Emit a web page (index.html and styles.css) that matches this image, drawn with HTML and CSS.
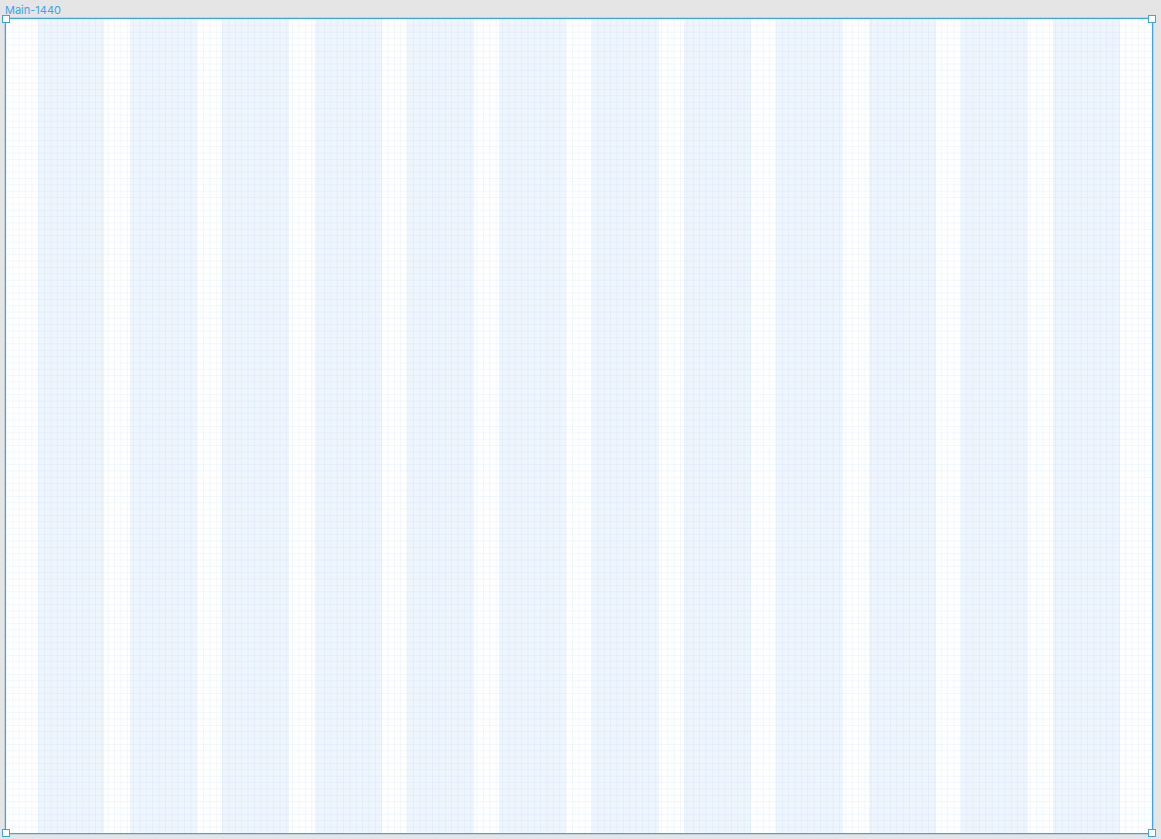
FILE: index.html
```html
<!DOCTYPE html>
<html>
<head>
<meta charset="utf-8">
<link rel="stylesheet" href="styles.css">
</head>
<body>
<div class="canvas">
  <div class="label">Main-1440</div>
  <div class="frame">
    <div class="columns">
      <div class="col"></div><div class="col"></div><div class="col"></div><div class="col"></div>
      <div class="col"></div><div class="col"></div><div class="col"></div><div class="col"></div>
      <div class="col"></div><div class="col"></div><div class="col"></div><div class="col"></div>
    </div>
    <div class="grid"></div>
    <span class="handle tl"></span>
    <span class="handle tr"></span>
    <span class="handle bl"></span>
    <span class="handle br"></span>
  </div>
</div>
</body>
</html>
```
FILE: styles.css
```css
html, body {
  margin: 0;
  padding: 0;
  background: #e5e5e5;
  width: 1161px;
  height: 839px;
  overflow: hidden;
}
.canvas {
  padding: 3px 0 0 5px;
}
.label {
  font-family: Inter, "Liberation Sans", sans-serif;
  font-size: 11px;
  line-height: 14px;
  height: 14px;
  color: #3fa2e6;
  margin-bottom: 1px;
}
.frame {
  position: relative;
  box-sizing: border-box;
  width: 1148px;
  height: 816px;
  border: 1px solid #3ea3ec;
  box-shadow: 0 0 0 0.5px rgba(62, 163, 236, 0.5);
  background: #ffffff;
}
.columns {
  display: flex;
  height: 100%;
  padding: 0 31.5px;
  gap: 25.4px;
  box-sizing: border-box;
}
.col {
  flex: 1;
  background: #eef5fd;
}
.grid {
  position: absolute;
  inset: 0;
  background-image:
    linear-gradient(to right, rgba(170, 205, 240, 0.16) 1px, transparent 1px),
    linear-gradient(to bottom, rgba(170, 205, 240, 0.16) 1px, transparent 1px);
  background-size: 6.37px 6.37px;
}
.handle {
  position: absolute;
  width: 8px;
  height: 8px;
  box-sizing: border-box;
  border: 1px solid #3ea3ec;
  background: #ffffff;
}
.tl { left: -4px; top: -4px; }
.tr { right: -4px; top: -4px; }
.bl { left: -4px; bottom: -4px; }
.br { right: -4px; bottom: -4px; }
```
